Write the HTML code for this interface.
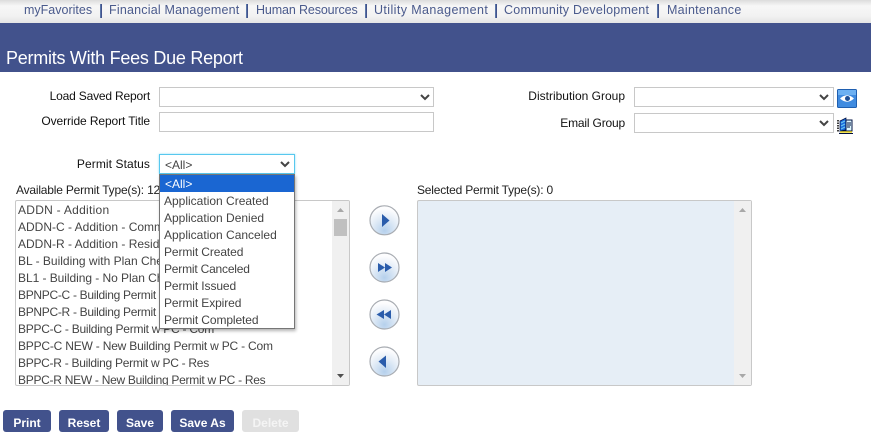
<!DOCTYPE html>
<html><head><meta charset="utf-8"><style>
html,body{margin:0;padding:0;width:871px;height:439px;overflow:hidden;background:#fff}
body{position:relative;font-family:"Liberation Sans",sans-serif}
.t{position:absolute;white-space:nowrap;font-size:12px;line-height:16px}
.b{position:absolute;box-sizing:border-box;background:#fff;border:1px solid #c8c8c8}
.nav{color:#4a5a8c;font-size:12.5px;top:2px}
.sep{position:absolute;top:4px;width:1px;height:14px;background:#42528c;border-left:1px solid #5a76a8}
.l{color:#111;font-size:12px}
.r{text-align:right}
.o{color:#444;font-size:12px;left:5px;position:absolute;white-space:nowrap;line-height:17px}
.i{color:#444;font-size:12px;left:2px;position:absolute;white-space:nowrap;line-height:17px}
.btn{position:absolute;top:410px;height:22px;background:#42528c;color:#fff;font-weight:bold;font-size:12px;line-height:26px;text-align:center;border-radius:3px}
.rb{position:absolute;left:369px}
</style></head><body>
<div style="position:absolute;left:0;top:0;width:871px;height:23px;background:linear-gradient(#dcdcdc 0,#f7f7f7 6px,#f2f2f2 16px,#e4e4e4 23px)"></div>
<span class="t nav" style="left:24px">myFavorites</span><i class="sep" style="left:100px"></i>
<span class="t nav" style="left:109px;letter-spacing:.2px">Financial Management</span><i class="sep" style="left:246px"></i>
<span class="t nav" style="left:256px;letter-spacing:-.13px">Human Resources</span><i class="sep" style="left:365px"></i>
<span class="t nav" style="left:374px;letter-spacing:.4px">Utility Management</span><i class="sep" style="left:495px"></i>
<span class="t nav" style="left:504px;letter-spacing:.23px">Community Development</span><i class="sep" style="left:657px"></i>
<span class="t nav" style="left:667px;letter-spacing:.27px">Maintenance</span>
<div style="position:absolute;left:0;top:23px;width:871px;height:49px;background:#42528c"></div>
<span class="t" style="left:6px;top:47px;color:#fff;font-size:18px;line-height:22px;letter-spacing:-.26px">Permits With Fees Due Report</span>

<span class="t l r" style="left:0;width:150px;top:88px;letter-spacing:-.18px">Load Saved Report</span>
<div class="b" style="left:159px;top:87px;width:275px;height:20px"></div>
<svg style="position:absolute;left:420px;top:94px" width="10" height="7"><path d="M1 1l4 4 4-4" fill="none" stroke="#444" stroke-width="2"/></svg>
<span class="t l r" style="left:0;width:150px;top:113px;letter-spacing:-.1px">Override Report Title</span>
<div class="b" style="left:159px;top:112px;width:275px;height:20px"></div>

<span class="t l r" style="left:470px;width:155px;top:88px">Distribution Group</span>
<div class="b" style="left:634px;top:87px;width:200px;height:20px"></div>
<svg style="position:absolute;left:819px;top:94px" width="10" height="7"><path d="M1 1l4 4 4-4" fill="none" stroke="#444" stroke-width="2"/></svg>
<svg style="position:absolute;left:837px;top:89px" width="20" height="19"><rect x=".5" y=".5" width="19" height="18" rx="1" fill="#3f8be0" stroke="#1f5fb0"/><rect x="1" y="1" width="18" height="5" fill="#6cb0f2"/><path d="M3 9.500Q10 3 17 9.500Q10 16 3 9.500Z" fill="#fff"/><circle cx="10.500" cy="9.500" r="2.500" fill="#1d4f96"/></svg>
<span class="t l r" style="left:470px;width:155px;top:115px;letter-spacing:-.18px">Email Group</span>
<div class="b" style="left:634px;top:113px;width:200px;height:20px"></div>
<svg style="position:absolute;left:819px;top:120px" width="10" height="7"><path d="M1 1l4 4 4-4" fill="none" stroke="#444" stroke-width="2"/></svg>
<svg style="position:absolute;left:837px;top:117px" width="17" height="17"><path d="M1 3v12" stroke="#000" stroke-width="1.500" stroke-dasharray="1.500 1"/><path d="M3 4L9 1V13L3 15Z" fill="#1c6ee0" stroke="#001040" stroke-width=".7"/><path d="M4 6l4-2M4 9l4-2M4 12l4-2" stroke="#6cc8f0"/><path d="M9 3h6v11H4l5-1z" fill="#dff8ff" stroke="#001040"/><path d="M10 6h4M10 8h4M10 10h3" stroke="#001040"/><path d="M3 15h12" stroke="#f0d820" stroke-width="1.500"/><path d="M2 16.500h14" stroke="#001040"/></svg>

<span class="t l r" style="left:0;width:150px;top:156px;letter-spacing:.08px">Permit Status</span>
<div class="b" style="left:159px;top:154px;width:136px;height:20px;border:1px solid #58c8ee;box-shadow:0 0 2px #8fdcf5"></div>
<span class="t" style="left:165px;top:157px;color:#444;font-size:12px">&lt;All&gt;</span>
<svg style="position:absolute;left:280px;top:161px" width="10" height="7"><path d="M1 1l4 4 4-4" fill="none" stroke="#444" stroke-width="2"/></svg>

<span class="t" style="left:16px;top:182px;color:#222;font-size:12px;letter-spacing:-.2px">Available Permit Type(s): 12</span>
<span class="t" style="left:417px;top:182px;color:#222;font-size:12px;letter-spacing:-.2px">Selected Permit Type(s): 0</span>

<div class="b" style="left:15px;top:200px;width:335px;height:186px;overflow:hidden;border-radius:2px">
<span class="i" style="top:1px;letter-spacing:.27px">ADDN - Addition</span>
<span class="i" style="top:18px">ADDN-C - Addition - Commercial</span>
<span class="i" style="top:35px">ADDN-R - Addition - Residential</span>
<span class="i" style="top:52px">BL - Building with Plan Check</span>
<span class="i" style="top:69px;letter-spacing:-.05px">BL1 - Building - No Plan Check</span>
<span class="i" style="top:86px;letter-spacing:-.3px">BPNPC-C - Building Permit No PC</span>
<span class="i" style="top:103px;letter-spacing:-.3px">BPNPC-R - Building Permit No PC</span>
<span class="i" style="top:120px;letter-spacing:-.25px">BPPC-C - Building Permit w PC - Com</span>
<span class="i" style="top:137px;letter-spacing:-.2px">BPPC-C NEW - New Building Permit w PC - Com</span>
<span class="i" style="top:154px;letter-spacing:-.28px">BPPC-R - Building Permit w PC - Res</span>
<span class="i" style="top:171px;letter-spacing:-.28px">BPPC-R NEW - New Building Permit w PC - Res</span>
<div style="position:absolute;right:0;top:0;width:17px;height:184px;background:#f0f0f0"></div>
<div style="position:absolute;right:2px;top:18px;width:13px;height:17px;background:#c0c0c0"></div>
<svg style="position:absolute;right:0;top:0" width="17" height="184"><path d="M5 11l3.500-4 3.500 4z" fill="#a8a8a8"/><path d="M5 173l3.500 4 3.500-4z" fill="#505050"/></svg>
</div>

<div class="b" style="left:417px;top:200px;width:335px;height:186px;background:#e6eef6;border-radius:2px">
<div style="position:absolute;right:0;top:0;width:17px;height:184px;background:#f0f0f0"></div>
<svg style="position:absolute;right:0;top:0" width="17" height="184"><path d="M5 11l3.500-4 3.500 4z" fill="#a8a8a8"/><path d="M5 173l3.500 4 3.500-4z" fill="#a8a8a8"/></svg>
</div>

<svg class="rb" style="top:204px" width="32" height="32"><defs><radialGradient id="g" cx=".5" cy=".85" r=".75"><stop offset="0" stop-color="#b5d0ec"/><stop offset=".6" stop-color="#e4edf7"/><stop offset="1" stop-color="#fdfdfe"/></radialGradient></defs><circle cx="15.500" cy="16.300" r="14.500" fill="url(#g)" stroke="#a8acb2" stroke-width="1.200"/><path d="M13 10L20.500 16.500L13 23Z" fill="#2a5cab"/></svg>
<svg class="rb" style="top:251px" width="32" height="32"><circle cx="15.500" cy="16.500" r="14.500" fill="url(#g)" stroke="#a8acb2" stroke-width="1.200"/><path d="M9 12L16 16.500L9 21ZM16 12L23 16.500L16 21Z" fill="#2a5cab"/></svg>
<svg class="rb" style="top:298px" width="32" height="32"><circle cx="15.500" cy="16.500" r="14.500" fill="url(#g)" stroke="#a8acb2" stroke-width="1.200"/><path d="M22 12L15 16.500L22 21ZM15 12L7.500 16.500L15 21Z" fill="#2a5cab"/></svg>
<svg class="rb" style="top:345px" width="32" height="32"><circle cx="15.500" cy="16.500" r="14.500" fill="url(#g)" stroke="#a8acb2" stroke-width="1.200"/><path d="M17 10.500L9.500 16.500L17 23Z" fill="#2a5cab"/></svg>

<div class="b" style="left:159px;top:174px;width:136px;height:155px;border:1px solid #767676;box-shadow:1px 2px 3px rgba(0,0,0,.3)">
<div style="position:absolute;left:0;top:0;width:134px;height:17px;background:#1a66d2"></div>
<span class="o" style="top:1px;color:#fff">&lt;All&gt;</span>
<span class="o" style="top:18px;left:4px">Application Created</span>
<span class="o" style="top:35px;left:4px">Application Denied</span>
<span class="o" style="top:52px;left:4px">Application Canceled</span>
<span class="o" style="top:69px;left:4px;letter-spacing:-.1px">Permit Created</span>
<span class="o" style="top:86px;left:4px;letter-spacing:-.2px">Permit Canceled</span>
<span class="o" style="top:103px;left:4px;letter-spacing:-.1px">Permit Issued</span>
<span class="o" style="top:120px;left:4px;letter-spacing:-.1px">Permit Expired</span>
<span class="o" style="top:137px;left:4px;letter-spacing:-.1px">Permit Completed</span>
</div>

<div class="btn" style="left:3px;width:48px">Print</div>
<div class="btn" style="left:59px;width:50px">Reset</div>
<div class="btn" style="left:117px;width:46px">Save</div>
<div class="btn" style="left:171px;width:63px">Save As</div>
<div class="btn" style="left:242px;width:57px;background:#e0e0e0;color:#f4f4f4">Delete</div>
</body></html>
